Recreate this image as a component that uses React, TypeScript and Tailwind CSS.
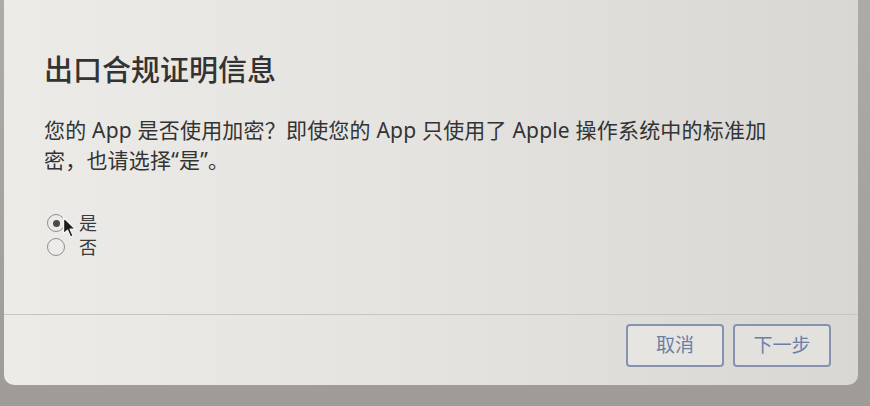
import React from "react";

const FONT = { fontFamily: '"Noto Sans", "Noto Sans CJK SC", sans-serif' };

function Radio({ checked, label }: { checked?: boolean; label: string }) {
  return (
    <div className="flex h-[24px] items-center gap-[14px]">
      <span className="flex h-[18px] w-[18px] items-center justify-center rounded-full border border-[#8f8f8f] bg-[#ecebe9]">
        {checked && <span className="h-[7px] w-[7px] rounded-full bg-[#4a4a4a]" />}
      </span>
      <span className="text-[18px] leading-none text-[#3a3a3a]">{label}</span>
    </div>
  );
}

export default function App() {
  return (
    <div
      className="flex h-[406px] w-[870px] bg-gradient-to-b from-[#aeaba7] to-[#9e9b98] pb-[21px] pl-[4px] pr-[12px]"
      style={FONT}
    >
      <div className="relative flex flex-1 flex-col rounded-b-[10px] bg-gradient-to-r from-[#ecebe8] via-[#e4e3e0] to-[#d9d7d3]">
        <div className="flex flex-1 flex-col pl-[40px] pr-[40px]">
          <h1 className="mt-[52px] text-[29px] font-medium leading-[36px] text-[#333333]">
            出口合规证明信息
          </h1>
          <p className="mt-[27px] whitespace-nowrap text-[21px] leading-[30px] tracking-[0.2px] text-[#333333]">
            您的 App 是否使用加密？即使您的 App 只使用了 Apple 操作系统中的标准加
            <br />
            密，也请选择“是”。
          </p>
          <div className="mt-[36px] flex flex-col pl-[3px]">
            <Radio checked label="是" />
            <Radio label="否" />
          </div>
        </div>

        <div className="h-px bg-[#c6c5c2]" />

        <div className="flex justify-end gap-[9px] pb-[18px] pr-[27px] pt-[9px]">
          <button className="h-[43px] w-[98px] rounded-[4px] border-2 border-[#8593b0] bg-[#e6e5e2] text-[19px] text-[#6a80a6]">
            取消
          </button>
          <button className="h-[43px] w-[98px] rounded-[4px] border-2 border-[#8593b0] bg-[#e2e1de] text-[19px] text-[#6a80a6]">
            下一步
          </button>
        </div>

        {/* mouse pointer over the first radio */}
        <svg
          className="absolute left-[58px] top-[216px]"
          width="16"
          height="24"
          viewBox="0 0 16 24"
        >
          <path
            d="M1.5 1.5 L1.5 18 L5.5 14.2 L8.6 21.2 L11.2 20 L8.2 13.2 L13.6 13.2 Z"
            fill="#1c1c1c"
            stroke="#f4f4f4"
            strokeWidth="1.4"
            strokeLinejoin="round"
          />
        </svg>
      </div>
    </div>
  );
}
